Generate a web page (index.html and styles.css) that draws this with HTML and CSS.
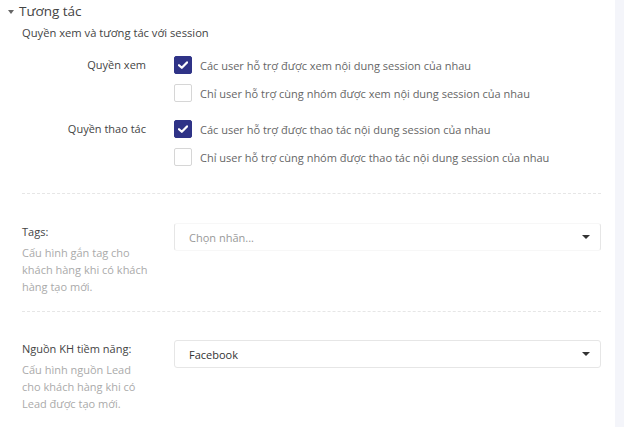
FILE: index.html
```html
<!DOCTYPE html>
<html lang="vi">
<head>
<meta charset="utf-8">
<title>Tương tác</title>
<link rel="stylesheet" href="styles.css">
</head>
<body>
<div class="page">
  <main class="content">
    <h2 class="section-title"><span class="title-caret"></span>Tương tác</h2>
    <div class="subtitle">Quyền xem và tương tác với session</div>

    <div class="perm-group">
      <div class="perm-label">Quyền xem</div>
      <div class="perm-options">
        <label class="opt"><span class="cb checked"><svg viewBox="0 0 10 8" width="10" height="8"><path d="M1 4.2 L3.8 6.8 L9 1.4" fill="none" stroke="#fff" stroke-width="2.2" stroke-linecap="round" stroke-linejoin="round"/></svg></span>Các user hỗ trợ được xem nội dung session của nhau</label>
        <label class="opt"><span class="cb"></span>Chỉ user hỗ trợ cùng nhóm được xem nội dung session của nhau</label>
      </div>
    </div>

    <div class="perm-group">
      <div class="perm-label">Quyền thao tác</div>
      <div class="perm-options">
        <label class="opt"><span class="cb checked"><svg viewBox="0 0 10 8" width="10" height="8"><path d="M1 4.2 L3.8 6.8 L9 1.4" fill="none" stroke="#fff" stroke-width="2.2" stroke-linecap="round" stroke-linejoin="round"/></svg></span>Các user hỗ trợ được thao tác nội dung session của nhau</label>
        <label class="opt"><span class="cb"></span>Chỉ user hỗ trợ cùng nhóm được thao tác nội dung session của nhau</label>
      </div>
    </div>

    <hr class="divider first">

    <div class="field">
      <div class="field-info">
        <div class="field-label">Tags:</div>
        <div class="field-desc">Cấu hình gắn tag cho khách hàng khi có khách hàng tạo mới.</div>
      </div>
      <div class="select select-tags">
        <span class="placeholder">Chọn nhãn...</span>
        <span class="caret"></span>
      </div>
    </div>

    <hr class="divider second">

    <div class="field">
      <div class="field-info">
        <div class="field-label">Nguồn KH tiềm năng:</div>
        <div class="field-desc narrow">Cấu hình nguồn Lead cho khách hàng khi có Lead được tạo mới.</div>
      </div>
      <div class="select">
        <span class="value">Facebook</span>
        <span class="caret"></span>
      </div>
    </div>
  </main>
  <aside class="rail"></aside>
</div>
</body>
</html>
```

FILE: styles.css
```css
* { box-sizing: border-box; }
html, body { margin: 0; padding: 0; }
body {
  font-family: "Open Sans", "Noto Sans", sans-serif;
  color: #555;
  background: #fff;
}
.page {
  display: flex;
  width: 624px;
  height: 427px;
  overflow: hidden;
}
.content {
  width: 615px;
  padding: 0 14px 0 22px;
}
.rail {
  flex: 1;
  background: #f4f5fa;
}
.section-title {
  margin: 0 0 0 -14px;
  display: flex;
  align-items: center;
  height: 22px;
  font-size: 13.5px;
  font-weight: 400;
  color: #444;
}
.title-caret {
  width: 0; height: 0;
  border-left: 3px solid transparent;
  border-right: 3px solid transparent;
  border-top: 4px solid #666;
  margin-right: 5px;
  margin-top: 1px;
}
.subtitle {
  margin-top: 2px;
  font-size: 11.2px;
  line-height: 18px;
  color: #444;
}
.perm-group {
  display: grid;
  grid-template-columns: 124px 1fr;
  column-gap: 28px;
  margin-top: 14px;
}
.perm-group + .perm-group { margin-top: 18px; }
.perm-label {
  text-align: right;
  font-size: 11px;
  line-height: 18px;
  color: #444;
}
.perm-options {
  display: flex;
  flex-direction: column;
  gap: 10px;
}
.opt {
  display: flex;
  align-items: center;
  gap: 8px;
  height: 18px;
  font-size: 11px;
  color: #666;
}
.cb {
  width: 18px; height: 18px;
  border: 1px solid #d6d6d6;
  border-radius: 2px;
  background: #fff;
  display: flex;
  align-items: center;
  justify-content: center;
  flex: none;
}
.cb.checked {
  background: #2f3387;
  border-color: #2f3387;
}
.divider {
  border: 0;
  border-top: 1px dashed #e6e6e6;
  height: 0;
}
.divider.first { margin: 27px 0 29px; }
.divider.second { margin: 16px 0 28px; }
.field {
  display: grid;
  grid-template-columns: 152px 1fr;
}
.field-label {
  font-size: 11px;
  line-height: 18px;
  color: #444;
}
.field-desc {
  margin-top: 3px;
  font-size: 11px;
  line-height: 17px;
  color: #aaa;
  width: 132px;
}
.field-desc.narrow { width: 118px; }
.select {
  height: 28px;
  border: 1px solid #e6e6e6;
  border-radius: 3px;
  display: flex;
  align-items: center;
  padding: 0 10px 0 14px;
  font-size: 11px;
}
.select-tags {
  border-top-color: #f7f7f7;
  border-bottom-color: #f7f7f7;
}
.placeholder { color: #999; flex: 1; }
.value { color: #333; flex: 1; }
.caret {
  width: 0; height: 0;
  border-left: 4px solid transparent;
  border-right: 4px solid transparent;
  border-top: 4px solid #333;
}
```
